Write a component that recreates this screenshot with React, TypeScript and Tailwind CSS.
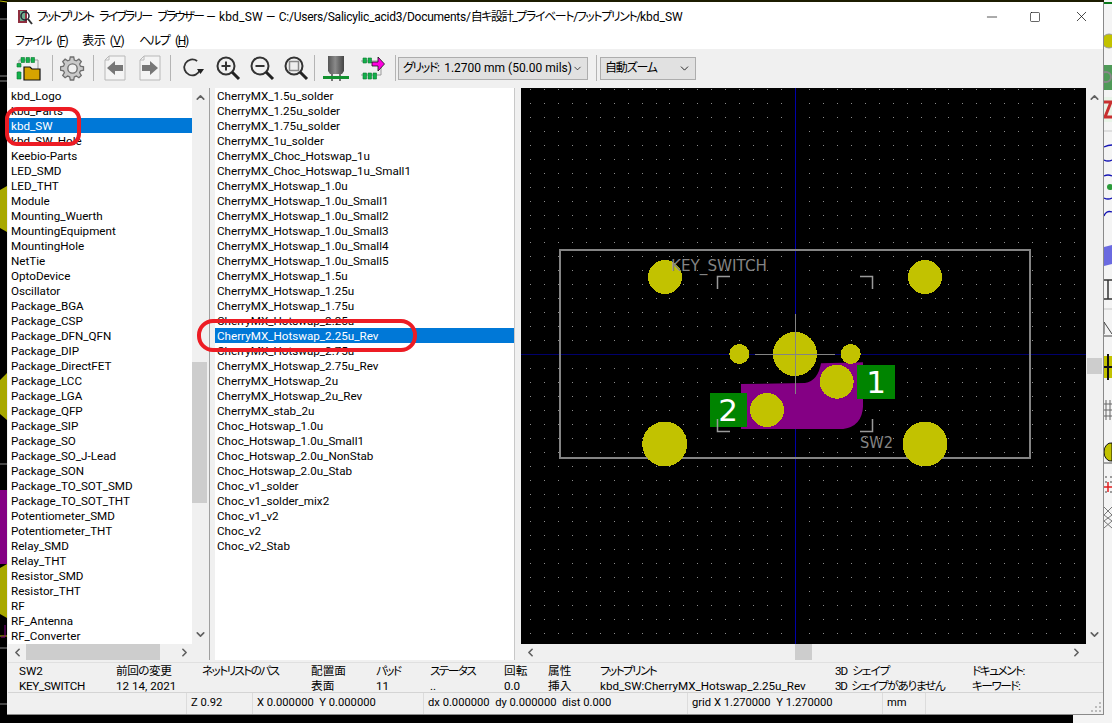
import { ChevronDown, ChevronLeft, ChevronRight, ChevronUp, Minus, Square, X } from "lucide-react";

const libraries = [
  "kbd_Logo", "kbd_Parts", "kbd_SW", "kbd_SW_Hole", "Keebio-Parts", "LED_SMD", "LED_THT", "Module",
  "Mounting_Wuerth", "MountingEquipment", "MountingHole", "NetTie", "OptoDevice", "Oscillator",
  "Package_BGA", "Package_CSP", "Package_DFN_QFN", "Package_DIP", "Package_DirectFET", "Package_LCC",
  "Package_LGA", "Package_QFP", "Package_SIP", "Package_SO", "Package_SO_J-Lead", "Package_SON",
  "Package_TO_SOT_SMD", "Package_TO_SOT_THT", "Potentiometer_SMD", "Potentiometer_THT", "Relay_SMD",
  "Relay_THT", "Resistor_SMD", "Resistor_THT", "RF", "RF_Antenna", "RF_Converter",
];

const footprints = [
  "CherryMX_1.5u_solder", "CherryMX_1.25u_solder", "CherryMX_1.75u_solder", "CherryMX_1u_solder",
  "CherryMX_Choc_Hotswap_1u", "CherryMX_Choc_Hotswap_1u_Small1", "CherryMX_Hotswap_1.0u",
  "CherryMX_Hotswap_1.0u_Small1", "CherryMX_Hotswap_1.0u_Small2", "CherryMX_Hotswap_1.0u_Small3",
  "CherryMX_Hotswap_1.0u_Small4", "CherryMX_Hotswap_1.0u_Small5", "CherryMX_Hotswap_1.5u",
  "CherryMX_Hotswap_1.25u", "CherryMX_Hotswap_1.75u", "CherryMX_Hotswap_2.25u", "CherryMX_Hotswap_2.25u_Rev",
  "CherryMX_Hotswap_2.75u", "CherryMX_Hotswap_2.75u_Rev", "CherryMX_Hotswap_2u", "CherryMX_Hotswap_2u_Rev",
  "CherryMX_stab_2u", "Choc_Hotswap_1.0u", "Choc_Hotswap_1.0u_Small1", "Choc_Hotswap_2.0u_NonStab",
  "Choc_Hotswap_2.0u_Stab", "Choc_v1_solder", "Choc_v1_solder_mix2", "Choc_v1_v2", "Choc_v2", "Choc_v2_Stab",
];

// tracking squeezes the Japanese labels to the width of the original UI font
const infoColumns = [
  { w: "w-[97px]", top: "SW2", bottom: "KEY_SWITCH", topCls: "", bottomCls: "tracking-[-0.3px]" },
  { w: "w-[86px]", top: "前回の変更", bottom: "12 14, 2021", topCls: "tracking-[-0.5px]", bottomCls: "" },
  { w: "w-[109px]", top: "ネットリストのパス", bottom: "", topCls: "tracking-[-1.6px]", bottomCls: "" },
  { w: "w-[65px]", top: "配置面", bottom: "表面", topCls: "", bottomCls: "" },
  { w: "w-[54px]", top: "パッド", bottom: "11", topCls: "tracking-[-1.6px]", bottomCls: "" },
  { w: "w-[74px]", top: "ステータス", bottom: "..", topCls: "tracking-[-1.6px]", bottomCls: "" },
  { w: "w-[44px]", top: "回転", bottom: "0.0", topCls: "", bottomCls: "" },
  { w: "w-[52px]", top: "属性", bottom: "挿入", topCls: "", bottomCls: "" },
  { w: "w-[235px]", top: "フットプリント", bottom: "kbd_SW:CherryMX_Hotswap_2.25u_Rev", topCls: "tracking-[-1.6px]", bottomCls: "" },
  { w: "w-[137px]", top: "3D シェイプ", bottom: "3D シェイプがありません", topCls: "tracking-[-1px] [word-spacing:3px]", bottomCls: "tracking-[-1.3px] [word-spacing:3px]" },
  { w: "w-[100px]", top: "ドキュメント:", bottom: "キーワード:", topCls: "tracking-[-1.5px]", bottomCls: "tracking-[-1.5px]" },
];

const statusCells = [
  { w: "w-[179px]", text: "" },
  { w: "w-[66px]", text: "Z 0.92" },
  { w: "w-[171px]", text: "X 0.000000  Y 0.000000" },
  { w: "w-[264px]", text: "dx 0.000000  dy 0.000000  dist 0.000" },
  { w: "w-[195px]", text: "grid X 1.270000  Y 1.270000" },
  { w: "w-[43px]", text: "mm" },
];

const GRID = 13.95;
const gridDots: { x: number; y: number }[] = [];
for (let i = -20; i <= 21; i++) {
  for (let j = -19; j <= 21; j++) {
    gridDots.push({ x: Math.round(795 + i * GRID), y: Math.round(354 + j * GRID) });
  }
}

function Sep() {
  return <div className="mx-[3px] h-[26px] w-px shrink-0 bg-[#b4b4b4]" />;
}

function Magnifier({ children }: { children?: React.ReactNode }) {
  return (
    <svg width="26" height="26" viewBox="0 0 26 26" fill="none">
      <circle cx="11" cy="11" r="8.5" stroke="#333" strokeWidth="2" />
      <path d="M17 17l7 7" stroke="#222" strokeWidth="3" />
      {children}
    </svg>
  );
}

function PageArrow({ flip }: { flip?: boolean }) {
  return (
    <svg width="22" height="26" viewBox="0 0 22 26" fill="none">
      <path d="M5 1h16v24H1V5z" fill="#f4f4f4" stroke="#b8b8b8" />
      <path d="M5 1v4H1" stroke="#b8b8b8" />
      <path
        d={flip ? "M19 13l-8-7v4H3v6h8v4z" : "M3 13l8-7v4h8v6h-8v4z"}
        fill="#777"
      />
    </svg>
  );
}

function App() {
  return (
    <div className="relative flex h-[723px] w-[1112px] overflow-hidden bg-black font-['Roboto','Noto_Sans_CJK_JP',sans-serif] text-[12px] text-black [font-feature-settings:'palt']">
      <LeftEdge />
      <div className="flex w-[1097px] flex-col">
        <div className="h-[2px] bg-[#1c1c00]" />
        <Window />
        <div className="flex h-[8px]">
          <div className="flex-1 bg-black" />
          <div className="w-[31px] bg-[#f4f4f4]" />
        </div>
      </div>
      <RightEdge />

      {/* red marks drawn on top of the screenshot */}
      <div className="absolute left-[5px] top-[107px] h-[39px] w-[76px] rounded-[12px] border-[4px] border-[#ed1c24]" />
      <div className="absolute left-[197px] top-[319px] h-[33px] w-[220px] rounded-[16px] border-[4px] border-[#ed1c24]" />
    </div>
  );
}

function Window() {
  return (
    <div className="flex h-[713px] flex-col border-b border-r border-[#8a8a8a] bg-[#f0f0f0] pl-px">
      <div className="-ml-px flex h-[29px] items-center bg-white pl-[10px]">
        <svg width="16" height="16" viewBox="0 0 16 16" className="mr-[4px] shrink-0" fill="none">
          <rect x="1" y="1" width="9" height="13" fill="#8f2f3f" />
          <rect x="3" y="2" width="5" height="10" fill="#6fae8f" />
          <circle cx="8" cy="7" r="4" stroke="#223" strokeWidth="1.5" />
          <path d="M11 10l4 5" stroke="#333" strokeWidth="2" />
        </svg>
        <span className="whitespace-pre">
          <span className="tracking-[-1.9px] [word-spacing:5px]">フットプリント ライブラリー ブラウザー</span>
          <span className="tracking-[0.2px]"> — kbd_SW — </span>
          <span className="tracking-[-0.25px]">C:/Users/Salicylic_acid3/Documents/</span>
          <span className="tracking-[-1.4px]">自キ設計_プライベート/フットプリント/</span>
          <span>kbd_SW</span>
        </span>
        <div className="ml-auto flex items-center">
          <Minus size={16} strokeWidth={1} className="mr-[29px]" />
          <Square size={12} strokeWidth={1.2} className="mr-[32px]" />
          <X size={17} strokeWidth={1} className="mr-[13px]" />
        </div>
      </div>
      <div className="-ml-px flex h-[18px] items-start gap-[15px] bg-white pl-[8px] text-[12px] leading-[20px]">
        <span className="tracking-[-1.4px] [word-spacing:4px]">ファイル (<u>F</u>)</span>
        <span className="tracking-[-0.5px] [word-spacing:2px]">表示 (<u>V</u>)</span>
        <span className="tracking-[-1.4px] [word-spacing:4px]">ヘルプ (<u>H</u>)</span>
      </div>
      <Toolbar />
      <div className="flex h-[575px] pb-[2px] pt-px text-[11.65px]">
        <div className="flex w-[201px] flex-col">
          <div className="flex h-[556px]">
            <div className="w-[184px] overflow-hidden bg-white">
              {libraries.map((name) => (
                <div
                  key={name}
                  className={
                    name === "kbd_SW"
                      ? "h-[15px] whitespace-nowrap bg-[#0078d7] pl-[3px] leading-[17px] text-white"
                      : "h-[15px] whitespace-nowrap pl-[3px] leading-[17px]"
                  }
                >
                  {name}
                </div>
              ))}
            </div>
            <div className="flex w-[17px] flex-col items-center justify-between py-[3px] text-[#606060]">
              <ChevronUp size={13} strokeWidth={3} />
              <div className="absolute left-[192px] top-[362px] h-[141px] w-[15px] bg-[#cdcdcd]" />
              <ChevronDown size={13} strokeWidth={3} />
            </div>
          </div>
          <div className="relative flex h-[16px] items-center justify-between pl-[3px] pr-[18px] text-[#606060]">
            <ChevronLeft size={13} strokeWidth={3} />
            <div className="absolute left-[18px] top-0 h-[16px] w-[134px] bg-[#cdcdcd]" />
            <ChevronRight size={13} strokeWidth={3} />
          </div>
        </div>
        <div className="w-[6px] border-l border-[#a0a0a0]" />
        <div className="w-[300px] overflow-hidden border-r border-[#c8c8c8] bg-white">
          {footprints.map((name) => (
            <div
              key={name}
              className={
                name === "CherryMX_Hotswap_2.25u_Rev"
                  ? "h-[15px] whitespace-nowrap bg-[#0078d7] pl-[2px] leading-[17px] text-white"
                  : "h-[15px] whitespace-nowrap pl-[2px] leading-[17px]"
              }
            >
              {name}
            </div>
          ))}
        </div>
        <div className="w-[6px]" />
        <div className="flex flex-1 flex-col">
          <div className="flex h-[556px]">
            <Board />
            <div className="relative flex flex-1 flex-col items-center justify-between py-[3px] text-[#606060]">
              <ChevronUp size={13} strokeWidth={3} />
              <div className="absolute left-px top-[270px] h-[16px] w-[15px] bg-[#cdcdcd]" />
              <ChevronDown size={13} strokeWidth={3} />
            </div>
          </div>
          <div className="relative flex h-[16px] items-center justify-between pl-[3px] pr-[20px] text-[#606060]">
            <ChevronLeft size={13} strokeWidth={3} />
            <div className="absolute left-[274px] top-0 h-[16px] w-[17px] bg-[#cdcdcd]" />
            <ChevronRight size={13} strokeWidth={3} />
          </div>
        </div>
      </div>
      <div className="flex h-[30px] border-t border-[#e0e0e0] pl-[11px] text-[11.65px] leading-[15px]">
        {infoColumns.map((col) => (
          <div key={col.top} className={`${col.w} shrink-0 whitespace-nowrap pt-px`}>
            <div className={col.topCls}>{col.top}</div>
            <div className={col.bottomCls}>{col.bottom}</div>
          </div>
        ))}
      </div>
      <div className="relative flex h-[22px] items-center border-t border-[#d4d4d4] text-[11.2px]">
        {statusCells.map((cell, i) => (
          <div
            key={i}
            className={`${cell.w} flex h-full shrink-0 items-center whitespace-pre border-r border-[#dcdcdc] pl-[4px]`}
          >
            {cell.text}
          </div>
        ))}
        <svg width="12" height="12" viewBox="0 0 12 12" className="absolute bottom-[1px] right-[1px]">
          <path d="M9 1h2v2H9zM5 5h2v2H5zM9 5h2v2H9zM1 9h2v2H1zM5 9h2v2H5zM9 9h2v2H9z" fill="#bcbcbc" />
        </svg>
      </div>
    </div>
  );
}

function Toolbar() {
  return (
    <div className="flex h-[38px] items-center pl-[7px]">
      <div className="flex w-[27px] justify-center">
        <svg width="25" height="25" viewBox="0 0 25 25" fill="none">
          <path d="M3 4h19v10M3 4v6M3 15v7" stroke="#999" />
          <path d="M5 1.5h3.500v5H5zM10 1.500h3.500v5H10zM15 1.500h3.500v5H15zM1 7.500h4v3.500H1zM1 16h4v7H1z" fill="#12b04a" stroke="#0b7a30" strokeWidth="0.6" />
          <path d="M8 11h6l2 2h8v11H8z" fill="#d6a400" stroke="#111" strokeWidth="1.2" />
        </svg>
      </div>
      <div className="ml-[7px]"><Sep /></div>
      <div className="ml-[1px] flex w-[30px] justify-center">
        <svg width="25" height="25" viewBox="0 0 24 24" fill="#c9c9c9" stroke="#6e6e6e" strokeWidth="1.3">
          <path d="M10.300 1.500h3.400l.6 3 2 .9 2.600-1.700 2.400 2.400-1.700 2.600.9 2 3 .6v3.400l-3 .6-.9 2 1.700 2.600-2.400 2.400-2.600-1.700-2 .9-.6 3h-3.400l-.6-3-2-.9-2.600 1.700-2.400-2.400 1.700-2.600-.9-2-3-.6v-3.400l3-.6.9-2-1.700-2.600 2.400-2.400 2.600 1.700 2-.9z" transform="translate(0 -.5) scale(.96)" />
          <circle cx="12" cy="12" r="4.500" fill="#f0f0f0" />
        </svg>
      </div>
      <div className="ml-[3px]"><Sep /></div>
      <div className="ml-[7px]"><PageArrow /></div>
      <div className="ml-[13px]"><PageArrow flip /></div>
      <div className="ml-[6px]"><Sep /></div>
      <div className="ml-[6px] flex w-[26px] justify-center">
        <svg width="22" height="22" viewBox="0 0 22 22" fill="none">
          <path d="M17.500 14a8 8 0 1 1-1-9" stroke="#333" strokeWidth="1.8" transform="rotate(-12 11 11)" />
          <path d="M15 12h7l-3.500 5z" fill="#222" />
        </svg>
      </div>
      <div className="ml-[9px]">
        <Magnifier><path d="M6.500 11h9M11 6.500v9" stroke="#333" strokeWidth="2" /></Magnifier>
      </div>
      <div className="ml-[8px]">
        <Magnifier><path d="M6.500 11h9" stroke="#333" strokeWidth="2" /></Magnifier>
      </div>
      <div className="ml-[8px]">
        <Magnifier><rect x="6.500" y="6.500" width="9" height="9" stroke="#888" strokeWidth="1.500" fill="#eee" /></Magnifier>
      </div>
      <div className="ml-[2px]"><Sep /></div>
      <div className="ml-[4px] flex w-[28px] justify-center">
        <svg width="28" height="27" viewBox="0 0 28 27" fill="none">
          <defs>
            <linearGradient id="can" x1="0" x2="1" y1="0" y2="0">
              <stop offset="0" stopColor="#555" />
              <stop offset="0.45" stopColor="#8a8a8a" />
              <stop offset="1" stopColor="#444" />
            </linearGradient>
          </defs>
          <path d="M6 1h16v15l-2 3H8l-2-3z" fill="url(#can)" />
          <path d="M10 19v7M18 19v7" stroke="#222" strokeWidth="1.2" />
          <rect x="1" y="21" width="26" height="3" fill="#12912f" />
        </svg>
      </div>
      <div className="ml-[9px] flex w-[26px] justify-center">
        <svg width="26" height="25" viewBox="0 0 26 25" fill="none">
          <path d="M2 5h20v14H2" stroke="#999" />
          <path d="M4 2h3.500v5H4zM9 2h3.500v5H9zM4 17h3.500v6H4zM9 17h3.500v6H9zM14 17h3.500v6H14z" fill="#12b04a" stroke="#0b7a30" strokeWidth="0.6" />
          <path d="M13 6h6V1l6.500 7L19 15v-5h-6z" fill="#ff00e0" stroke="#111" strokeWidth="0.8" />
        </svg>
      </div>
      <div className="ml-[7px]"><Sep /></div>
      <div className="-ml-px flex h-[23px] w-[190px] items-center justify-between border border-[#adadad] bg-[#e1e1e1] pl-[4px] pr-[4px]">
        <span className="whitespace-pre">
          <span className="tracking-[-1.4px] [word-spacing:4px]">グリッド: </span>1.2700 mm (50.00 mils)
        </span>
        <ChevronDown size={13} strokeWidth={1.5} />
      </div>
      <div className="ml-[5px]"><Sep /></div>
      <div className="flex h-[23px] w-[96px] items-center justify-between border border-[#adadad] bg-[#e1e1e1] pl-[4px] pr-[4px]">
        <span className="whitespace-nowrap tracking-[-1.2px]">自動ズーム</span>
        <ChevronDown size={13} strokeWidth={1.5} />
      </div>
    </div>
  );
}

function Board() {
  const pads = [
    { x: 665, y: 277, r: 17 },
    { x: 925, y: 277, r: 17 },
    { x: 664.7, y: 444, r: 22.5 },
    { x: 925, y: 444, r: 22.5 },
    { x: 795, y: 354, r: 22 },
    { x: 739.3, y: 354, r: 10 },
    { x: 850.7, y: 354, r: 10 },
    { x: 836.7, y: 381.7, r: 17 },
    { x: 767, y: 410, r: 17 },
  ];
  const marks = [
    "M717.500 289v-12.500h12.500",
    "M860 276.500h12.500v12.500",
    "M717.500 419v12.500h12.500",
    "M860 431.500h12.500v-12.500",
  ];
  return (
    <svg width="565" height="556" viewBox="521 88 565 556" className="shrink-0 bg-black">
      {gridDots.map((d, i) => (
        <rect key={i} x={d.x} y={d.y} width="1" height="1" fill="#8c8c8c" />
      ))}
      <path d="M521 354.500H1086" stroke="#00006c" shapeRendering="crispEdges" />
      <path d="M795.500 88V644" stroke="#0000a8" shapeRendering="crispEdges" />
      <rect x="560" y="250" width="470" height="208" fill="none" stroke="#848484" strokeWidth="1.5" shapeRendering="crispEdges" />
      <path
        d="M741 384L805 383Q818 381 821 363.300L863 362.300V406.700Q862 426 843.300 429H741Z"
        fill="#840084"
      />
      {pads.map((p, i) => (
        <circle key={i} cx={p.x} cy={p.y} r={p.r} fill="#c2c200" shapeRendering="crispEdges" />
      ))}
      <path d="M755 354.500H835M795.500 314V394" stroke="#848484" shapeRendering="crispEdges" />
      <text x="671" y="271" fontSize="16" fill="#848484" fontFamily="'DejaVu Sans', sans-serif" textLength="96" lengthAdjust="spacingAndGlyphs">KEY_SWITCH</text>
      <text x="860" y="448" fontSize="16" fill="#848484" fontFamily="'DejaVu Sans', sans-serif" textLength="33" lengthAdjust="spacingAndGlyphs">SW2</text>
      <rect x="857" y="365" width="38" height="34" fill="#008400" />
      <rect x="710" y="393" width="37" height="34" fill="#008400" />
      <text x="876" y="393" fontSize="31" fill="#fff" textAnchor="middle" fontFamily="'DejaVu Sans', sans-serif">1</text>
      <text x="728" y="421" fontSize="31" fill="#fff" textAnchor="middle" fontFamily="'DejaVu Sans', sans-serif">2</text>
      {marks.map((d) => (
        <path key={d} d={d} fill="none" stroke="#9a9a9a" strokeWidth="1.5" />
      ))}
    </svg>
  );
}

function LeftEdge() {
  return (
    <svg width="7" height="723" viewBox="0 0 7 723" className="shrink-0">
      <rect width="7" height="723" fill="#000" />
      <path d="M0 19h7M0 76h7M0 81h7M0 220h7M0 464h7M0 648h7M0 704h7" stroke="#8a8a8a" />
      <path d="M0 1l7 1M0 636h7" stroke="#b8b800" />
      <path d="M7 186L0 190V228L7 232zM7 373L0 380V414L7 420zM7 564L0 568V614L7 618z" fill="#a8a800" />
      <rect y="490" width="7" height="74" fill="#840084" />
      <path d="M5 625v12H1" stroke="#840084" fill="none" />
    </svg>
  );
}

function RightEdge() {
  return (
    <svg width="8" height="723" viewBox="0 0 8 723" className="shrink-0">
      <rect width="8" height="723" fill="#f4f4f4" />
      <rect y="2" width="8" height="2" fill="#0a7a1a" />
      <circle cx="5" cy="41" r="7" fill="#c2c200" stroke="#999" />
      <rect y="65" width="8" height="25" fill="#4f9a58" />
      <circle cx="2" cy="77" r="5" fill="none" stroke="#888" strokeWidth="2" />
      <rect y="97" width="8" height="25" fill="#e8f4e8" />
      <path d="M0 102h7L1 117h7" stroke="#c83030" strokeWidth="3" fill="none" />
      <path d="M0 131h8" stroke="#c8c8c8" />
      <path d="M0 147q4-2 8-2M0 160q4 2 8 0M0 176q4-2 8 0M0 198q4 2 8 0M0 216q2-6 8-4" stroke="#1414b4" strokeWidth="1.3" fill="none" />
      <circle cx="6" cy="187" r="3" fill="#2a9a3a" />
      <path d="M0 247L8 245V264L0 266z" fill="#6a6ae0" />
      <path d="M0 280h8M0 299h8M4 280v19" stroke="#333" strokeWidth="1.5" />
      <path d="M0 309h8" stroke="#c8c8c8" />
      <path d="M0 334l0-12 8 12M0 336h8" stroke="#444" fill="none" />
      <rect y="356" width="8" height="22" fill="#c2c200" />
      <path d="M4 354v26M0 367h8" stroke="#111" strokeWidth="2" />
      <path d="M0 404h8M0 410h8M0 416h8M2 400v20M6 400v20" stroke="#666" />
      <path d="M0 452a7 9 0 0 1 8-9v18a7 9 0 0 1-8-9z" fill="#c2c200" stroke="#111" />
      <path d="M0 463h8" stroke="#555" />
      <path d="M1 477h2M6 477h2M1 482h2M6 482h2M1 492h2M6 492h2" stroke="#444" />
      <path d="M0 487h8M4 482v10" stroke="#e02020" strokeWidth="1.5" />
      <path d="M0 507l8 8-8 6 8 7M8 507l-8 8 8 6-8 7" stroke="#777" fill="none" />
    </svg>
  );
}

export default App;
